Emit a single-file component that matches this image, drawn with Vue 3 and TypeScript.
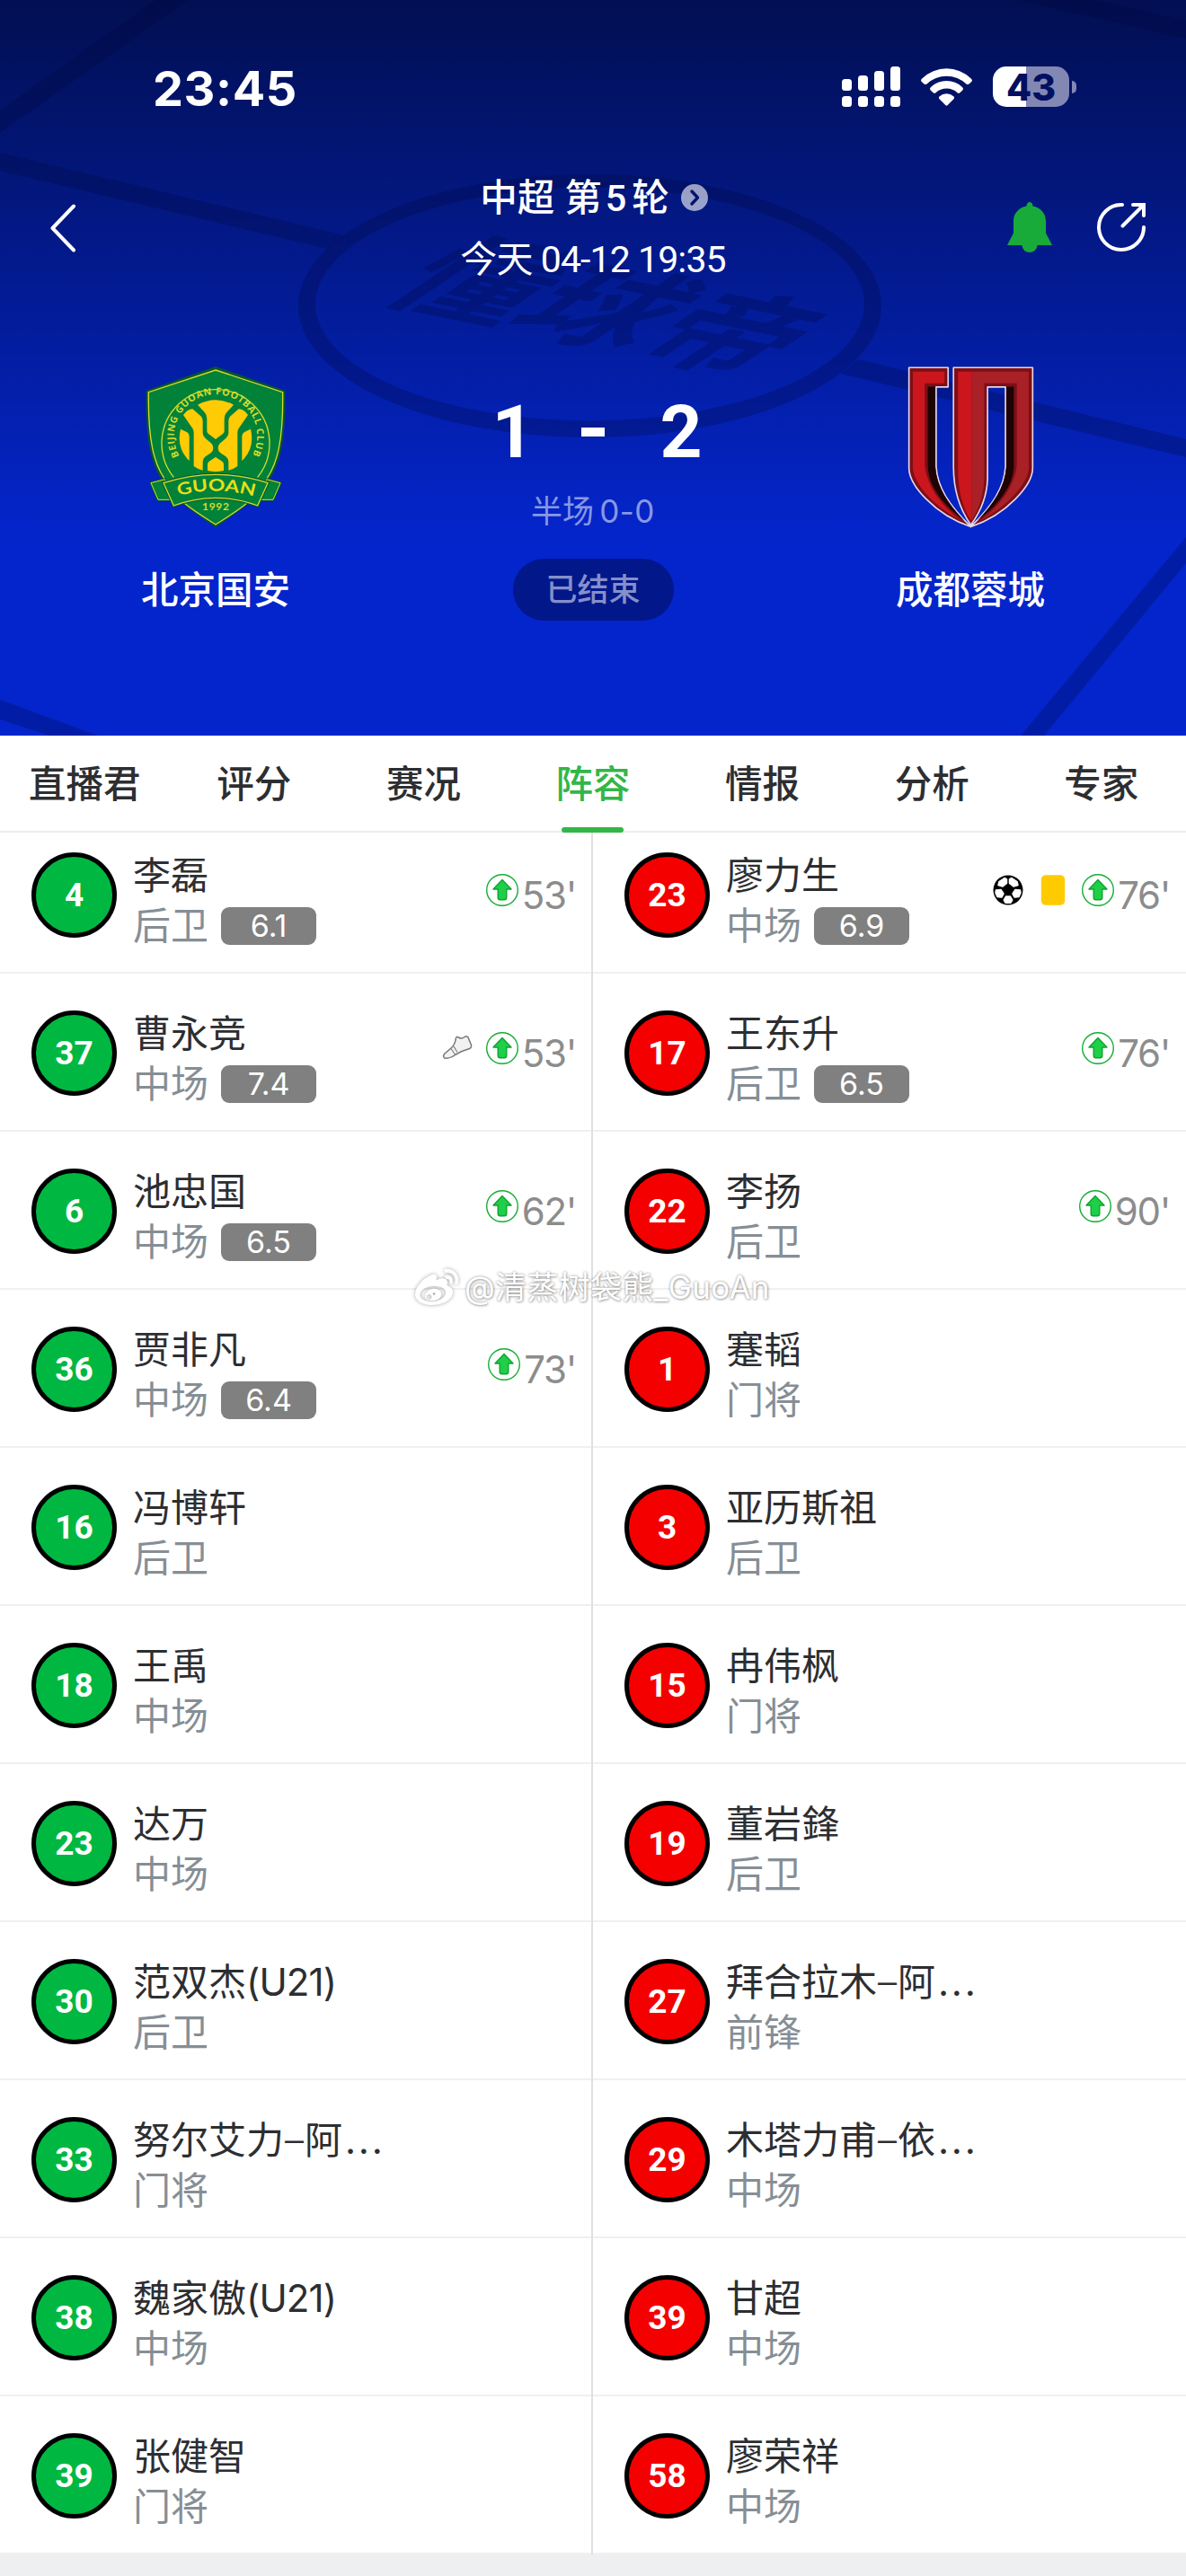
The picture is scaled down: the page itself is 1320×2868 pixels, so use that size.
<script setup lang="ts">
type EventKind = 'goal' | 'card' | 'assist' | 'in'

interface Player {
  no: number
  name: string
  pos: string
  rating?: string
  events?: EventKind[]
  minute?: string
}

interface NameRun {
  text: string
  kind: 'cjk' | 'latin' | 'dash' | 'dots'
}

const tabs: string[] = ['直播君', '评分', '赛况', '阵容', '情报', '分析', '专家']
const activeTab = '阵容'

const home: Player[] = [
  { no: 4, name: '李磊', pos: '后卫', rating: '6.1', events: ['in'], minute: "53'" },
  { no: 37, name: '曹永竞', pos: '中场', rating: '7.4', events: ['assist', 'in'], minute: "53'" },
  { no: 6, name: '池忠国', pos: '中场', rating: '6.5', events: ['in'], minute: "62'" },
  { no: 36, name: '贾非凡', pos: '中场', rating: '6.4', events: ['in'], minute: "73'" },
  { no: 16, name: '冯博轩', pos: '后卫' },
  { no: 18, name: '王禹', pos: '中场' },
  { no: 23, name: '达万', pos: '中场' },
  { no: 30, name: '范双杰(U21)', pos: '后卫' },
  { no: 33, name: '努尔艾力–阿...', pos: '门将' },
  { no: 38, name: '魏家傲(U21)', pos: '中场' },
  { no: 39, name: '张健智', pos: '门将' },
]

const away: Player[] = [
  { no: 23, name: '廖力生', pos: '中场', rating: '6.9', events: ['goal', 'card', 'in'], minute: "76'" },
  { no: 17, name: '王东升', pos: '后卫', rating: '6.5', events: ['in'], minute: "76'" },
  { no: 22, name: '李扬', pos: '后卫', events: ['in'], minute: "90'" },
  { no: 1, name: '蹇韬', pos: '门将' },
  { no: 3, name: '亚历斯祖', pos: '后卫' },
  { no: 15, name: '冉伟枫', pos: '门将' },
  { no: 19, name: '董岩鋒', pos: '后卫' },
  { no: 27, name: '拜合拉木–阿...', pos: '前锋' },
  { no: 29, name: '木塔力甫–依...', pos: '中场' },
  { no: 39, name: '甘超', pos: '中场' },
  { no: 58, name: '廖荣祥', pos: '中场' },
]

const squads = [
  { side: 'home', players: home },
  { side: 'away', players: away },
]

const signalHeights: number[] = [13.5, 17.5, 22.5, 27.5]

// Splits a name into script runs so each can be tracked separately.
function runs(name: string): NameRun[] {
  return (name.match(/–|\.+|[!-~]+|[^!-~–]+/g) ?? []).map((text) => {
    if (text === '–') return { text, kind: 'dash' }
    if (text.startsWith('.')) return { text, kind: 'dots' }
    return { text, kind: /^[!-~]/.test(text) ? 'latin' : 'cjk' }
  })
}
</script>

<template>
  <div class="screen">
    <header class="hero">
      <svg class="pitch" viewBox="0 0 1320 819" aria-hidden="true">
        <g fill="#00083c" fill-opacity=".27">
          <path d="M173 0H209L0 148V123Z" />
          <path d="M0 170L383 262L364 277L0 190Z" />
          <path d="M1132 0H1220L1320 23V43Z" />
          <path d="M955 400L1320 489V509L936 416Z" />
          <path d="M1320 598V627L1162 819H1136Z" />
          <path d="M0 779L109 819H55L0 801Z" />
          <path fill-rule="evenodd" d="M332 340.500a324.500 146.500 0 1 0 649 0a324.500 146.500 0 1 0 -649 0ZM351 338.500a305.500 130 0 1 0 611 0a305.500 130 0 1 0 -611 0Z" />
          <text class="pitch-word" transform="matrix(1.4 .29 -1.28 .86 402 342)" x="0" y="-13">懂球帝</text>
        </g>
      </svg>

      <div class="status">
        <span class="clock">23:45</span>
        <div class="status-icons">
          <div class="signal">
            <div v-for="h in signalHeights" :key="h" class="signal-col">
              <i :style="{ height: h + 'px' }"></i>
              <i class="dot"></i>
            </div>
          </div>
          <svg class="wifi" viewBox="0 0 57 42" width="57" height="42">
            <path fill="#fff" d="M1.200 11.500A39 39 0 0 1 55.800 11.500Q58 13.500 56 15.300L53.500 17.600Q52 18.600 50.500 17.400A32 32 0 0 0 6.500 17.400Q5 18.600 3.500 17.600L1 15.300Q-1 13.500 1.200 11.500Z" />
            <path fill="#fff" d="M11 21A25.500 25.500 0 0 1 46 21Q48 22.700 46.300 24.400L43.300 27.200Q42 28.300 40.500 27.200A18 18 0 0 0 16.500 27.200Q15 28.300 13.700 27.200L10.700 24.400Q9 22.700 11 21Z" />
            <path fill="#fff" d="M20.700 31.200A12 12 0 0 1 36.300 31.200Q38 32.800 36.300 34.400L29.500 41.300Q28.500 42.200 27.500 41.300L20.700 34.400Q19 32.800 20.700 31.200Z" />
          </svg>
          <div class="battery">
            <div class="cell"><b>43</b></div>
            <i class="nub"></i>
          </div>
        </div>
      </div>

      <nav class="nav">
        <svg class="back" width="30" height="56" viewBox="0 0 30 56">
          <path d="M27 3.500L3.500 28L27 52.500" fill="none" stroke="#fff" stroke-width="4" stroke-linecap="round" stroke-linejoin="round" />
        </svg>
        <div class="meta">
          <div class="round">
            <span>中超 第<em>5</em>轮</span>
            <svg width="30" height="30" viewBox="0 0 30 30">
              <circle cx="15" cy="15" r="15" fill="#fff" fill-opacity=".6" />
              <path d="M12 8L18.500 15L12 22" fill="none" stroke="#04156c" stroke-width="3.400" stroke-linecap="round" stroke-linejoin="round" />
            </svg>
          </div>
          <div class="date">今天 04-12 19:35</div>
        </div>
        <div class="actions">
          <svg width="50" height="56" viewBox="0 0 50 56">
            <path fill="#18ab3a" d="M25 0C27 0 28.300 1.500 28.500 4.500C37 6 43 12.500 43 21V34.500L50 48H33.500C33 53 29.500 56 25 56S17 53 16.500 48H0L7 34.500V21C7 12.500 13 6 21.500 4.500C21.700 1.500 23 0 25 0Z" />
          </svg>
          <svg width="54" height="54" viewBox="0 0 54 54">
            <g fill="none" stroke="#fff" stroke-width="4" stroke-linecap="round">
              <path d="M28 2A25 25 0 1 0 52 27" />
              <path d="M28.500 25.500L51 3" />
              <path d="M40 2H52V14" stroke-linejoin="miter" />
            </g>
          </svg>
        </div>
      </nav>

      <div class="match">
        <div class="team">
          <svg class="crest" viewBox="63 52 474 543" width="158" height="181">
            <defs>
              <path id="ring" d="M181 358A138.500 138.500 0 1 1 419 358" />
              <path id="ribbon" d="M176 488Q300 452 430 490" />
            </defs>
            <path d="M300 55L532 135C535 290 520 395 462 455C440 500 360 550 300 593C240 550 160 500 138 455C80 395 65 290 68 135Z" fill="#07552f" />
            <path d="M300 67L524 141C526 290 510 390 455 450C435 500 360 545 300 583C240 545 165 500 145 450C90 390 74 290 76 141Z" fill="#018238" stroke="#d5dc2c" stroke-width="4" />
            <path d="M160 425A180 180 0 1 1 440 425" fill="none" stroke="#d5dc2c" stroke-width="4" />
            <text class="ring-text"><textPath href="#ring" textLength="570" lengthAdjust="spacing" startOffset="5">BEIJING GUOAN FOOTBALL CLUB</textPath></text>
            <g fill="#ffcb05">
              <path d="M240 183Q300 150 360 183L337 208Q329 216 329 230V270Q329 276 324 280L300 298L276 280Q271 276 271 270V230Q271 216 263 208Z" />
              <path d="M192 217Q206 198 223 197L252 222Q257 228 257 238V278Q257 288 266 295L286 312Q292 318 292 328Q292 338 284 344L266 356Q257 363 257 374V402Q240 398 227 388V274Q227 266 221 259Z" />
              <path d="M408 217Q394 198 377 197L348 222Q343 228 343 238V278Q343 288 334 295L314 312Q308 318 308 328Q308 338 316 344L334 356Q343 363 343 374V402Q360 398 373 388V274Q373 266 379 259Z" />
              <path d="M183 264L205 275Q212 280 212 288V370Q168 328 183 264Z" />
              <path d="M417 264L395 275Q388 280 388 288V370Q432 328 417 264Z" />
              <path d="M273 403V382Q273 376 278 372L300 358L322 372Q327 376 327 382V403Q300 410 273 403Z" />
            </g>
            <path d="M84 444L130 432L165 500L108 500ZM516 444L470 432L435 500L492 500Z" fill="#018238" stroke="#07552f" stroke-width="9" />
            <path d="M84 444L130 432L165 500L108 500ZM516 444L470 432L435 500L492 500Z" fill="#018238" stroke="#d5dc2c" stroke-width="3" />
            <path d="M126 444Q300 388 474 444L440 520Q300 468 160 520Z" fill="#018238" stroke="#07552f" stroke-width="10" />
            <path d="M126 444Q300 388 474 444L440 520Q300 468 160 520Z" fill="#018238" stroke="#d5dc2c" stroke-width="4" />
            <text class="ribbon-text"><textPath href="#ribbon" textLength="256" lengthAdjust="spacingAndGlyphs">GUOAN</textPath></text>
            <text class="year" x="301" y="535" text-anchor="middle">1992</text>
          </svg>
          <div class="team-name">北京国安</div>
        </div>

        <div class="result">
          <div class="score"><span class="home-goals">1</span><i></i><span class="away-goals">2</span></div>
          <div class="half">半场<em>0-0</em></div>
          <div class="pill">已结束</div>
        </div>

        <div class="team">
          <svg class="crest" viewBox="60 52 424 543" width="141" height="181">
            <g stroke="#e6d6e6" stroke-width="5" stroke-linejoin="round">
              <path d="M65 58H196V123H156V390C160 460 200 520 272 591C150 550 65 450 65 395Z" fill="#7c0f18" />
              <path d="M214 58H479V395C479 450 394 550 272 591C345 520 384 460 388 390V123H328V430C326 490 305 540 272 585C240 540 214 480 214 390Z" fill="#7c0f18" />
            </g>
            <path d="M78 72H184V111H118V385C124 450 170 520 240 570C140 520 78 440 78 392Z" fill="#cb161d" />
            <path d="M128 122H153V390C157 455 195 515 250 570C175 515 128 450 128 385Z" fill="#1d0303" />
            <path d="M229 72H274V572C246 530 229 475 229 400Z" fill="#cb161d" />
            <path d="M274 72H466V392C466 440 402 520 304 570C372 520 420 450 426 385V111H317V430C315 490 297 535 274 572Z" fill="#a92026" />
            <path d="M391 122H416V385C416 450 369 515 294 570C349 515 387 455 391 390Z" fill="#1d0303" />
          </svg>
          <div class="team-name">成都蓉城</div>
        </div>
      </div>
    </header>

    <div class="tabs">
      <div v-for="t in tabs" :key="t" class="tab" :class="{ active: t === activeTab }">{{ t }}</div>
    </div>

    <main class="lineup">
      <section v-for="s in squads" :key="s.side" class="squad" :class="s.side">
        <div v-for="p in s.players" :key="p.no" class="player">
          <div class="shirt">{{ p.no }}</div>
          <div class="info">
            <div class="name"><span v-for="(r, i) in runs(p.name)" :key="i" :class="r.kind">{{ r.text }}</span></div>
            <div class="sub">
              <span class="pos">{{ p.pos }}</span>
              <span v-if="p.rating" class="rating">{{ p.rating }}</span>
            </div>
          </div>
          <div v-if="p.events" class="events">
            <template v-for="e in p.events" :key="e">
              <svg v-if="e === 'goal'" class="ev" viewBox="0 0 36 36">
                <circle cx="18" cy="18" r="16.500" fill="#000" />
                <g fill="#fff" stroke="#fff" stroke-width="1.500" stroke-linejoin="round">
                  <path d="M8 8.500L14 4.500L16.500 6V10.500L12 14L7 12.500Z" />
                  <path d="M28 8.500L22 4.500L19.500 6V10.500L24 14L29 12.500Z" />
                  <path d="M4.500 18L10 17.500L13 22L11 26L6 25.500L4 21Z" />
                  <path d="M31.500 18L26 17.500L23 22L25 26L30 25.500L32 21Z" />
                  <path d="M15.500 25H20.500L22.800 29L21 32.200H15L13.200 29Z" />
                </g>
              </svg>
              <svg v-else-if="e === 'card'" class="ev" viewBox="0 0 36 36">
                <rect x="4.800" y="1.200" width="26.400" height="33.600" rx="5" fill="#ffcb00" />
              </svg>
              <svg v-else-if="e === 'assist'" class="ev" viewBox="0 0 36 36">
                <path d="M16.500 6.500Q17.500 4.500 19 6Q23 8 26 5.500Q28.500 3.800 30 6L33.500 14.500Q34 17.500 31.500 18.500L23 21.500L15.500 25.500Q9 30 4 29Q1.500 27.500 3.500 24.500L11.500 17.500Q15.500 14 16.500 6.500Z" fill="#f2f2f2" stroke="#777" stroke-width="1.500" stroke-linejoin="round" />
                <path d="M11 18.500L15.500 25M14 16L18 22.500" fill="none" stroke="#777" stroke-width="1.100" />
              </svg>
              <svg v-else class="ev" viewBox="0 0 36 36">
                <circle cx="18" cy="18" r="17.300" fill="#fff" stroke="#14ae35" stroke-width="1.400" />
                <path d="M18 6.500L28 17H22.800V26Q22.800 28.800 20.300 28.800H15.700Q13.200 28.800 13.200 26V17H8Z" fill="#1fce49" stroke="#0ba62c" stroke-width="1.400" stroke-linejoin="round" />
              </svg>
            </template>
            <span class="minute">{{ p.minute }}</span>
          </div>
        </div>
      </section>
    </main>

    <div class="credit">
      <svg width="50" height="42" viewBox="0 0 50 42">
        <g fill="#fff">
          <path fill-rule="evenodd" d="M17 8Q23 5 24 9Q24.500 11 23.500 13Q30 10 34 12Q37 14 35.500 19Q43 22 42 28C40 37 29 41 18 41C8 41 0 36 0 29C0 21 9 11 17 8ZM20 20C11 20.500 5 25 5.500 30C6 35 13 37.500 20 37C29 36 35 31 34 26C33 21.500 27 19.500 20 20ZM19 23C25 22 30 25 29 30C28 35 22 37 16 36C11 35 10 31 12 28C13.500 25 16 23.500 19 23ZM15.500 29a3 3 0 1 0 .1 0ZM21 27a1.500 1.500 0 1 0 .1 0Z" />
          <path d="M33 1C42 -1 50 7 48 16Q47 19 44.500 17.500Q44 17 44.500 14C45 8 40 4 34 5Q31 3 33 1Z" />
          <path d="M34 8C39 7 43 11 41.500 16Q40 18 38.500 16C39 13 37.500 11.500 35 12Q32 10 34 8Z" />
        </g>
      </svg>
      <span>@清蒸树袋熊_GuoAn</span>
    </div>
  </div>
</template>

<style>
body {
  margin: 0;
  background: #eeeff1;
}
</style>

<style scoped>
.screen {
  position: relative;
  width: 1320px;
  height: 2868px;
  overflow: hidden;
  background: #eeeff1;
  font-family: Inter, 'Noto Sans CJK SC', sans-serif;
}
em,
i {
  font-style: normal;
}
svg {
  display: block;
  flex: none;
}

.hero {
  position: relative;
  box-sizing: border-box;
  height: 819px;
  padding-top: 70px;
  background: linear-gradient(rgba(0, 0, 0, 0.6), rgba(0, 0, 0, 0) 600px) #0425cc;
  color: #fff;
}
.pitch {
  position: absolute;
  left: 0;
  top: 0;
  width: 1320px;
  height: 819px;
}
.pitch-word {
  font: 700 100px 'Noto Sans CJK SC', sans-serif;
}
.status,
.nav,
.match {
  position: relative;
}

.status {
  display: flex;
  justify-content: space-between;
  align-items: center;
  height: 53px;
  padding: 0 122px 0 170px;
}
.clock {
  font-size: 54px;
  font-weight: 700;
  line-height: 53px;
  padding-top: 3px;
  letter-spacing: 0.6px;
}
.status-icons {
  display: flex;
  align-items: center;
}
.signal {
  display: flex;
  align-items: flex-end;
  gap: 7px;
  height: 45px;
}
.signal-col {
  display: flex;
  flex-direction: column;
  gap: 6px;
}
.signal-col i {
  width: 11px;
  border-radius: 3.5px;
  background: #fff;
}
.signal-col .dot {
  height: 12px;
}
.wifi {
  margin: 0 23px;
}
.battery {
  display: flex;
  align-items: center;
  gap: 3px;
}
.cell {
  width: 85px;
  height: 45px;
  border-radius: 15px;
  background: linear-gradient(90deg, #fff 37px, #8288b3 37px);
  color: #031062;
  text-align: center;
}
.cell b {
  font-size: 41px;
  font-weight: 800;
  line-height: 46px;
}
.nub {
  width: 5px;
  height: 14px;
  border-radius: 0 5px 5px 0;
  background: #8288b3;
}

.nav {
  display: grid;
  grid-template-columns: 320px 1fr 320px;
  align-items: center;
  height: 121px;
  margin-top: 69px;
}
.back {
  margin-left: 55px;
}
.meta {
  display: flex;
  flex-direction: column;
  align-items: center;
  gap: 15px;
  padding-top: 1px;
}
.round {
  display: flex;
  align-items: center;
  gap: 13px;
  height: 54px;
  padding-left: 2px;
  font-size: 41.5px;
  font-weight: 500;
  line-height: 54px;
}
.round em {
  font-family: Roboto, sans-serif;
  margin: 0 6px 0 4px;
}
.date {
  font-family: Roboto, 'Noto Sans CJK SC', sans-serif;
  font-size: 41px;
  line-height: 54px;
  letter-spacing: -0.9px;
  white-space: nowrap;
}
.actions {
  display: flex;
  align-items: center;
  justify-content: flex-end;
  gap: 50px;
  padding-right: 45px;
  padding-bottom: 2px;
}

.match {
  display: grid;
  grid-template-columns: 480px 360px 480px;
  margin-top: 94px;
}
.team {
  display: flex;
  flex-direction: column;
  align-items: center;
  gap: 39px;
}
.ring-text {
  font: 700 32px 'Open Sans', sans-serif;
  fill: #d5dc2c;
}
.ribbon-text {
  font: 700 56px Lato, sans-serif;
  fill: #e6df1c;
}
.year {
  font: 700 36px Lato, sans-serif;
  fill: #d5dc2c;
  letter-spacing: 2px;
}
.team-name {
  font-size: 41.5px;
  font-weight: 500;
  line-height: 60px;
}
.result {
  display: flex;
  flex-direction: column;
  align-items: center;
  padding-top: 34px;
}
.score {
  display: grid;
  grid-template-columns: repeat(3, 96px);
  align-items: center;
  justify-items: center;
  height: 80px;
  font-family: Roboto, sans-serif;
  font-size: 82px;
  font-weight: 700;
  line-height: 80px;
}
.score i {
  width: 26px;
  height: 10px;
  background: #fff;
}
.home-goals {
  margin-left: 14px;
}
.away-goals {
  margin-left: 4px;
}
.half {
  margin-top: 28px;
  font-size: 35px;
  line-height: 40px;
  color: rgba(255, 255, 255, 0.53);
}
.half em {
  margin-left: 6px;
  letter-spacing: 0.5px;
}
.pill {
  margin-top: 33px;
  width: 179px;
  height: 69px;
  border-radius: 35px;
  background: #02178a;
  color: #858fc9;
  font-size: 35px;
  font-weight: 500;
  line-height: 69px;
  text-align: center;
}

.tabs {
  position: relative;
  z-index: 1;
  box-sizing: border-box;
  display: grid;
  grid-template-columns: repeat(7, 1fr);
  height: 108px;
  background: #fff;
  border-bottom: 2px solid #ededee;
}
.tab {
  box-sizing: border-box;
  display: flex;
  flex-direction: column;
  align-items: center;
  justify-content: space-between;
  height: 108px;
  padding-top: 6px;
  font-size: 41.5px;
  font-weight: 500;
  line-height: 96px;
  color: #2d2e31;
}
.tab.active {
  color: #32b648;
}
.tab.active::after {
  content: '';
  width: 69px;
  height: 6px;
  border-radius: 3px;
  background: #32b648;
}

.lineup {
  display: grid;
  grid-template-columns: 1fr 1fr;
  margin-top: -19px;
  background: #fff;
}
.squad.home {
  box-shadow: inset -2px 0 #e0e0e2;
}
.player {
  box-sizing: border-box;
  display: flex;
  align-items: center;
  height: 176px;
  padding: 2px 18px 0 35px;
  border-bottom: 2px solid #f0f0f1;
}
.home .player {
  margin-right: 2px;
  padding-right: 17px;
}
.shirt {
  box-sizing: border-box;
  flex: none;
  width: 95px;
  height: 95px;
  border: 5px solid #000;
  border-radius: 50%;
  color: #fff;
  font-family: Roboto, sans-serif;
  font-size: 37px;
  font-weight: 700;
  line-height: 85px;
  text-align: center;
}
.home .shirt {
  background: #00b841;
}
.away .shirt {
  background: #f50000;
}
.info {
  margin: 14px 0 0 18px;
}
.name {
  font-size: 42px;
  line-height: 56px;
  color: #2d2e31;
  white-space: nowrap;
}
.latin {
  letter-spacing: -0.9px;
}
.dash {
  font-weight: 300;
  margin: 0 1px;
}
.dots {
  margin-left: 3px;
  letter-spacing: 2.7px;
}
.sub {
  display: flex;
  align-items: center;
  height: 56px;
}
.pos {
  font-size: 42px;
  line-height: 56px;
  color: #868e95;
}
.rating {
  width: 106px;
  height: 42px;
  margin-left: 14px;
  border-radius: 9px;
  background: #808080;
  color: #fff;
  font-size: 34px;
  line-height: 42px;
  text-align: center;
}
.events {
  display: flex;
  align-items: center;
  gap: 14px;
  margin-left: auto;
}
.ev {
  width: 36px;
  height: 36px;
  margin-top: -11px;
}
.minute {
  margin: 1px 0 0 -10px;
  font-size: 42px;
  font-weight: 400;
  line-height: 56px;
  letter-spacing: -1.3px;
  color: #8c8c8c;
}

.credit {
  position: absolute;
  left: 462px;
  top: 1408px;
  z-index: 2;
  display: flex;
  align-items: center;
  gap: 5px;
  height: 50px;
  color: #fff;
  font-size: 35px;
  line-height: 50px;
  letter-spacing: 0.3px;
  white-space: nowrap;
  text-shadow: 0 0 3px rgba(0, 0, 0, 0.4), 1px 1px 3px rgba(0, 0, 0, 0.25);
}
.credit svg {
  overflow: visible;
  filter: drop-shadow(0 0 2px rgba(0, 0, 0, 0.35));
}
</style>
